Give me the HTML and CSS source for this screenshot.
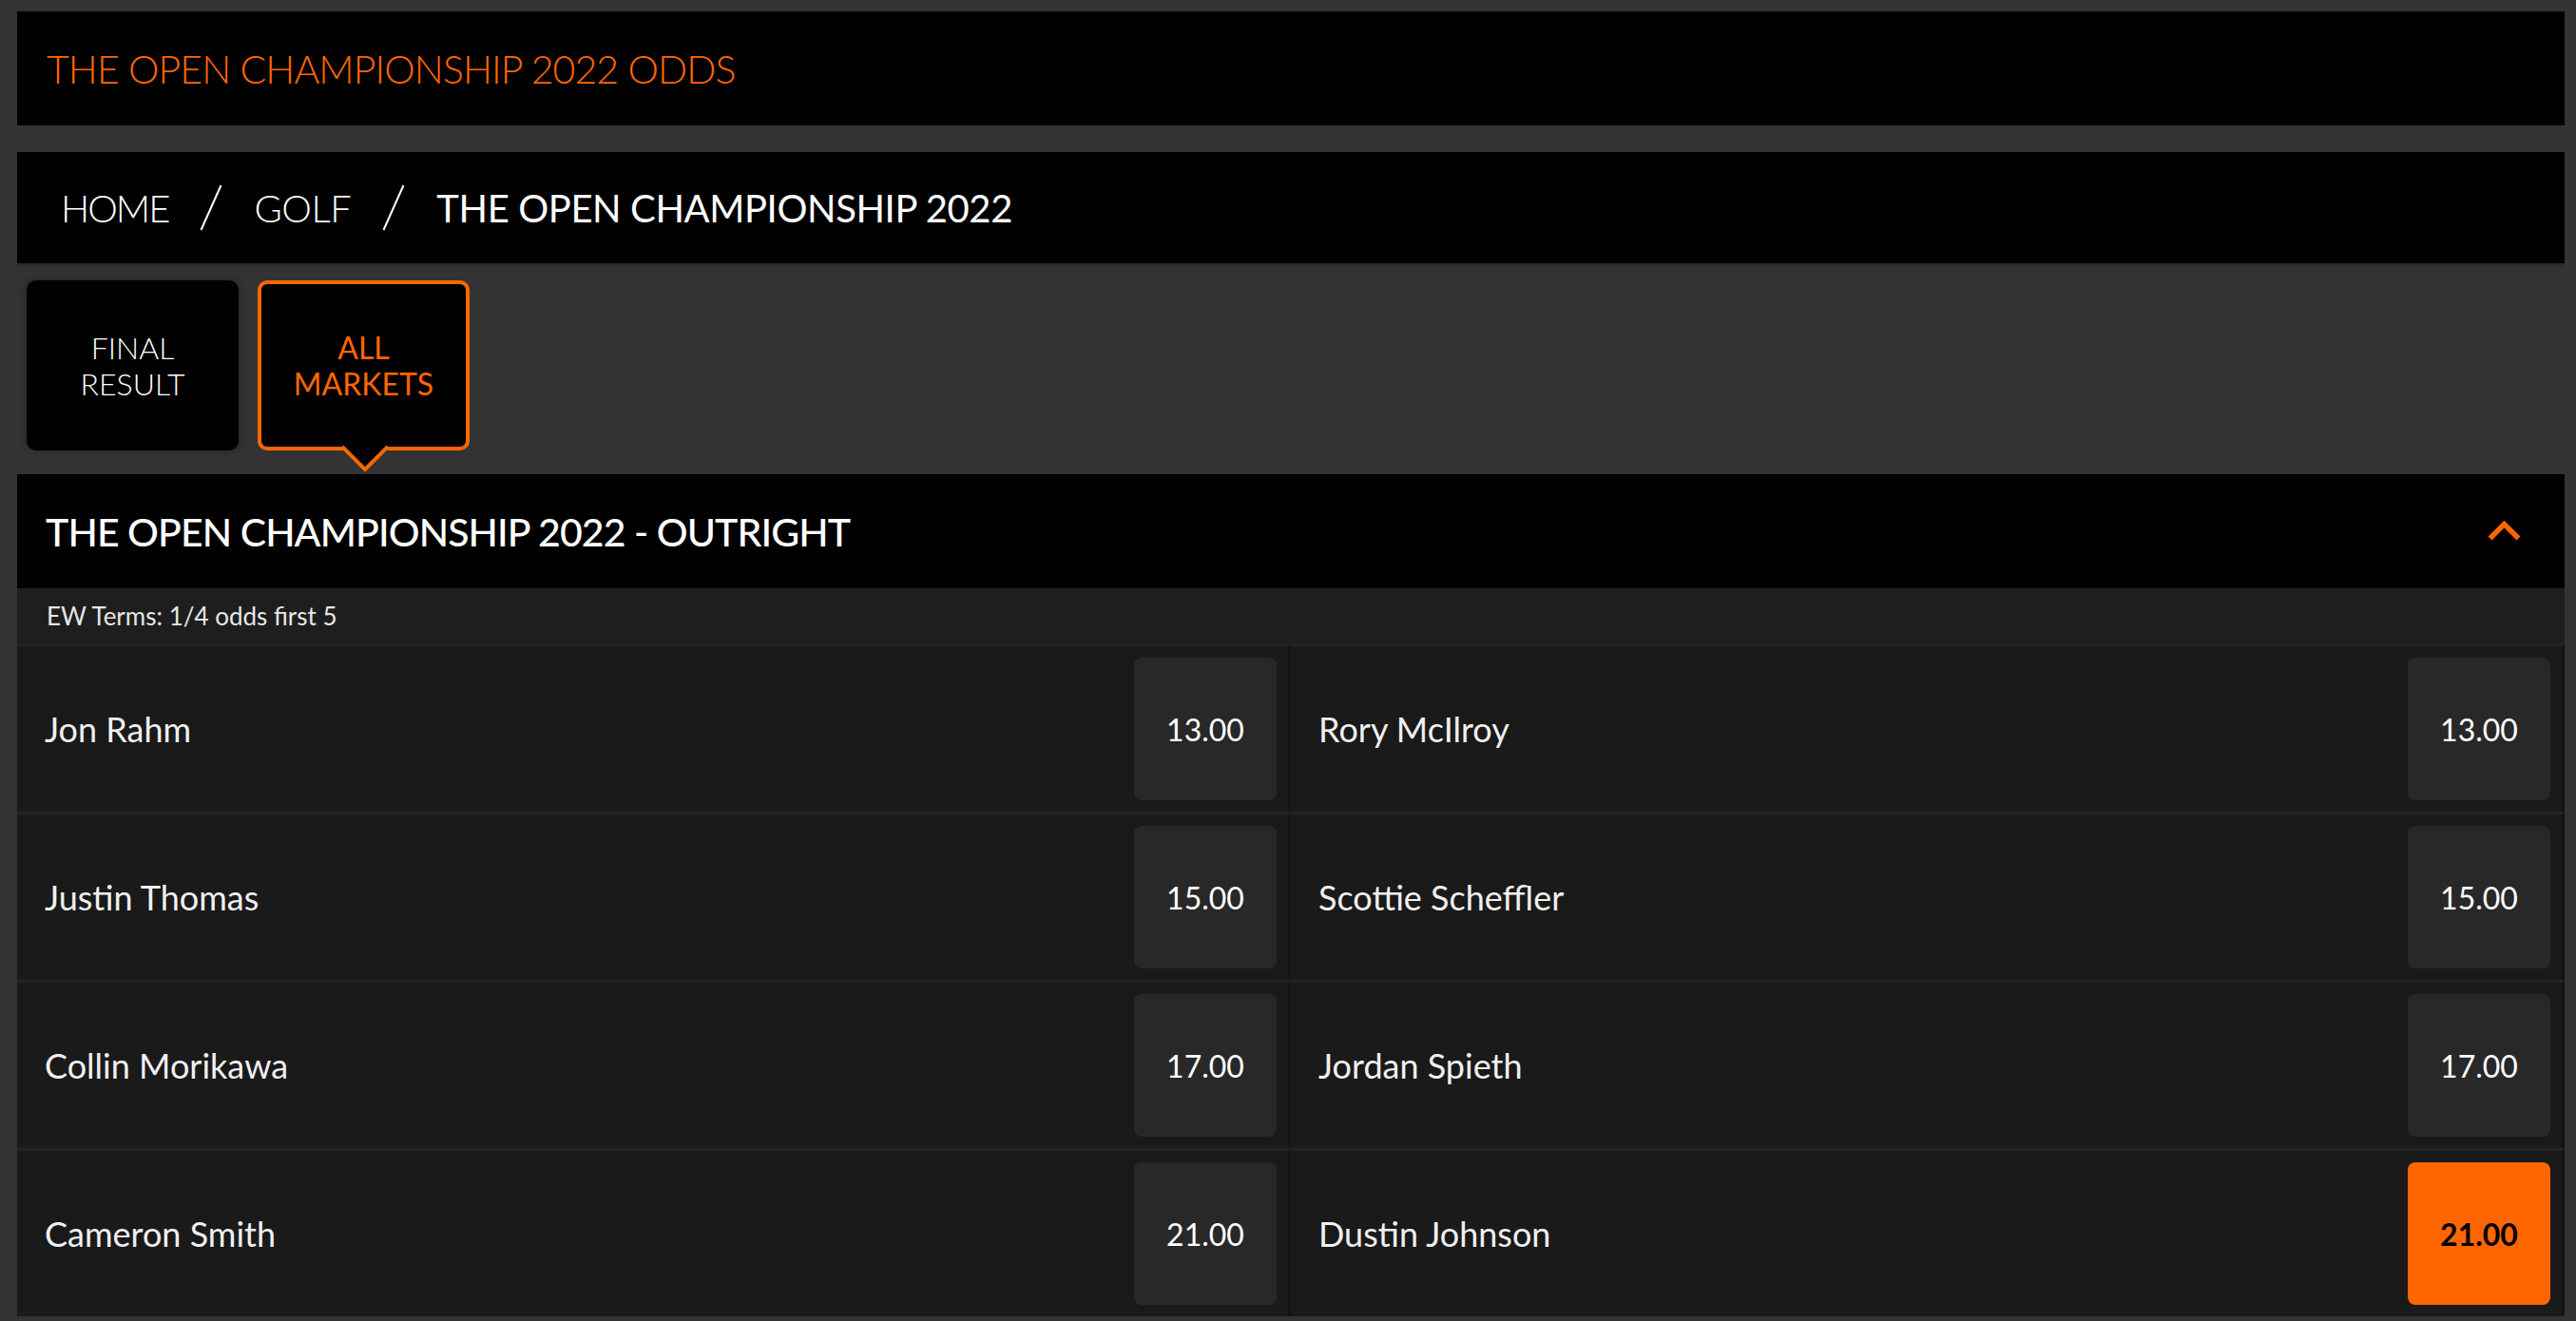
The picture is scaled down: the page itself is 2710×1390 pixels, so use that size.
FILE: index.html
```html
<!DOCTYPE html>
<html lang="en">
<head>
<meta charset="utf-8">
<title>The Open Championship 2022 Odds</title>
<link rel="stylesheet" href="styles.css">
</head>
<body>
<div class="page">
  <header class="title-bar">
    <h1 class="title">THE OPEN CHAMPIONSHIP 2022 ODDS</h1>
  </header>

  <nav class="crumbs">
    <span class="crumb home">HOME</span>
    <svg class="slash" viewBox="0 0 24 49" width="24" height="49"><line x1="22.5" y1="1" x2="1.5" y2="48" stroke="#fff" stroke-width="2"/></svg>
    <span class="crumb">GOLF</span>
    <svg class="slash" viewBox="0 0 24 49" width="24" height="49"><line x1="22.5" y1="1" x2="1.5" y2="48" stroke="#fff" stroke-width="2"/></svg>
    <span class="crumb current">THE OPEN CHAMPIONSHIP 2022</span>
  </nav>

  <div class="tabs">
    <div class="tab">FINAL<br>RESULT</div>
    <div class="tab active">ALL<br>MARKETS
      <svg class="pointer" viewBox="0 0 48 30" width="48" height="30"><path d="M0 2 L24 26 L48 2" fill="#000" stroke="#ff6600" stroke-width="4"/></svg>
    </div>
  </div>

  <section class="market">
    <div class="market-head">
      <h2 class="market-title">THE OPEN CHAMPIONSHIP 2022 - OUTRIGHT</h2>
      <svg class="chevron" viewBox="0 0 35 21" width="35" height="21"><polyline points="2.5,18.5 17.5,3.5 32.5,18.5" fill="none" stroke="#ff6600" stroke-width="5.5"/></svg>
    </div>
    <div class="ew">EW Terms: 1/4 odds first 5</div>
    <div class="grid">
      <div class="cell"><span class="name">Jon Rahm</span><span class="odds">13.00</span></div>
      <div class="cell"><span class="name">Rory McIlroy</span><span class="odds">13.00</span></div>
      <div class="cell"><span class="name">Justin Thomas</span><span class="odds">15.00</span></div>
      <div class="cell"><span class="name">Scottie Scheffler</span><span class="odds">15.00</span></div>
      <div class="cell"><span class="name">Collin Morikawa</span><span class="odds">17.00</span></div>
      <div class="cell"><span class="name">Jordan Spieth</span><span class="odds">17.00</span></div>
      <div class="cell"><span class="name">Cameron Smith</span><span class="odds">21.00</span></div>
      <div class="cell"><span class="name">Dustin Johnson</span><span class="odds selected">21.00</span></div>
    </div>
  </section>
</div>
</body>
</html>
```

FILE: styles.css
```css
* { box-sizing: border-box; }

html, body {
  margin: 0;
  padding: 0;
  background: #333333;
  height: 100%;
  overflow: hidden;
}

body {
  font-family: Lato, "Open Sans", "Liberation Sans", sans-serif;
  color: #fff;
}

.page {
  padding: 12px 12px 0 18px;
}

.title-bar {
  height: 120px;
  background: #000;
  display: flex;
  align-items: center;
  padding-left: 31px;
}

.title {
  margin: 0;
  color: #ff6600;
  font-size: 41px;
  font-weight: 300;
  letter-spacing: -0.9px;
}

.crumbs {
  margin-top: 28px;
  height: 120px;
  background: #000;
  border-bottom: 3px solid #2c2c2c;
  display: flex;
  align-items: center;
  padding-left: 46px;
  gap: 33px;
  font-size: 40px;
}

.crumb {
  font-weight: 300;
  letter-spacing: -0.5px;
}

.crumb.home {
  letter-spacing: -2px;
}

.crumb.current {
  font-weight: 400;
  letter-spacing: -0.4px;
}

.slash {
  display: block;
}

.tabs {
  display: flex;
  gap: 20px;
  padding: 15px 0 25px 10px;
}

.tab {
  position: relative;
  width: 223px;
  height: 179px;
  background: #000;
  border-radius: 10px;
  display: flex;
  align-items: center;
  justify-content: center;
  text-align: center;
  font-size: 32px;
  line-height: 38px;
  font-weight: 300;
  color: #fff;
  box-shadow: 0 0 8px rgba(0, 0, 0, 0.35);
}

.tab.active {
  border: 4px solid #ff6600;
  color: #ff6600;
  font-weight: 400;
  box-shadow: none;
}

.pointer {
  position: absolute;
  left: 85px;
  top: calc(100% - 2px);
  display: block;
}

.market-head {
  height: 120px;
  background: #000;
  display: flex;
  align-items: center;
  justify-content: space-between;
  padding: 0 46px 0 30px;
}

.market-title {
  margin: 0;
  font-size: 41px;
  font-weight: 500;
  letter-spacing: -0.9px;
}

.chevron {
  display: block;
  margin-top: -2px;
}

.ew {
  height: 58px;
  background: #1e1e1e;
  display: flex;
  align-items: center;
  padding-left: 31px;
  font-size: 26px;
  color: #e6e6e6;
}

.grid {
  display: grid;
  grid-template-columns: 1fr 1fr;
}

.cell {
  height: 177px;
  background: #1a1a1a;
  border-top: 3px solid #242424;
  border-right: 3px solid #141414;
  display: flex;
  align-items: center;
  justify-content: space-between;
  padding: 12px 12px 12px 29px;
}

.name {
  font-size: 36px;
  font-weight: 400;
  color: #f0f0f0;
}

.odds {
  width: 150px;
  height: 150px;
  background: #282828;
  border-radius: 8px;
  display: flex;
  align-items: center;
  justify-content: center;
  font-size: 32px;
  font-weight: 400;
  color: #fff;
}

.odds.selected {
  background: #ff6600;
  color: #000;
  font-weight: 700;
}
```
